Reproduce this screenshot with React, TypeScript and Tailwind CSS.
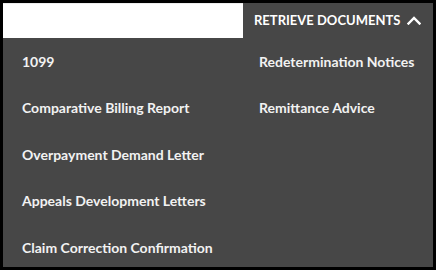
const leftItems = [
  "1099",
  "Comparative Billing Report",
  "Overpayment Demand Letter",
  "Appeals Development Letters",
  "Claim Correction Confirmation",
];

const rightItems = ["Redetermination Notices", "Remittance Advice"];

function ChevronUp() {
  return (
    <svg width="14" height="9" viewBox="0 0 14 9" fill="none" className="ml-[7px]">
      <path d="M1.5 7.5L7 2l5.5 5.5" stroke="white" strokeWidth="2.4" strokeLinecap="square" />
    </svg>
  );
}

export default function App() {
  return (
    <div className="w-[436px] h-[270px] bg-black p-[3px] font-['Lato','Liberation_Sans',sans-serif]">
      <div className="w-full h-full bg-[#474747] flex flex-col overflow-hidden">
        <div className="flex h-[35px] shrink-0">
          <div className="w-[240px] bg-white border-t border-[#ececec]" />
          <button className="flex-1 flex items-center pl-[11px] text-white text-[13px] font-bold uppercase">
            Retrieve Documents
            <ChevronUp />
          </button>
        </div>
        <div className="grid grid-cols-[237px_1fr] pl-[19px]">
          <ul className="flex flex-col">
            {leftItems.map((item) => (
              <li key={item} className="h-[46.5px] flex items-center text-[14px] font-bold text-[#f2f2f2]">
                {item}
              </li>
            ))}
          </ul>
          <ul className="flex flex-col">
            {rightItems.map((item) => (
              <li key={item} className="h-[46.5px] flex items-center text-[14px] font-bold text-[#f2f2f2]">
                {item}
              </li>
            ))}
          </ul>
        </div>
      </div>
    </div>
  );
}
